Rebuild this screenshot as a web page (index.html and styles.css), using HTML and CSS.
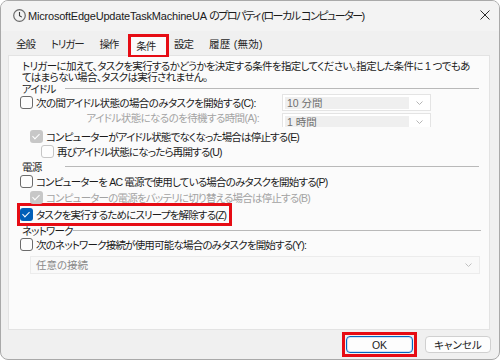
FILE: index.html
```html
<!DOCTYPE html>
<html lang="ja">
<head>
  <meta charset="UTF-8">
  <title>プロパティ</title>
  <link rel="stylesheet" href="styles.css">
</head>
<body>
  <div class="window">
    <div class="titlebar">
      <svg class="app-icon" width="13" height="13" viewBox="0 0 13 13">
        <circle cx="6.5" cy="6.5" r="5.8" fill="#f2f2f2" stroke="#6a6a6a" stroke-width="1.2"/>
        <path d="M6.5 3v3.7l2.3 1.4" fill="none" stroke="#3a3a3a" stroke-width="1.1"/>
      </svg>
      <span class="title">MicrosoftEdgeUpdateTaskMachineUA <span class="jp">のプロパティ (ローカル コンピューター)</span></span>
      <svg class="close" width="10" height="10" viewBox="0 0 10 10">
        <path d="M0.5 0.5l9 9M9.5 0.5l-9 9" stroke="#2b2b2b" stroke-width="1"/>
      </svg>
    </div>

    <div class="tabs">
      <span class="tab">全般</span>
      <span class="tab">トリガー</span>
      <span class="tab">操作</span>
      <span class="tab active">条件</span>
      <span class="tab">設定</span>
      <span class="tab history">履歴 (無効)</span>
    </div>

    <div class="panel">
      <p class="intro">トリガーに加えて、タスクを実行するかどうかを決定する条件を指定してください。指定した条件に 1 つでもあ<br>てはまらない場合、タスクは実行されません。</p>

      <!-- アイドル -->
      <div class="group-head"><span>アイドル</span></div>
      <div class="row grid">
        <label class="check"><span class="box"></span>次の間アイドル状態の場合のみタスクを開始する(C):</label>
        <div class="combo"><span class="field">10 分間</span><svg class="chev" width="7" height="4" viewBox="0 0 7 4"><path d="M0.5 0.5l3 3 3-3" fill="none" stroke="#b5b5b5"/></svg></div>
      </div>
      <div class="row grid row-wait">
        <span class="sub-label">アイドル状態になるのを待機する時間(A):</span>
        <div class="combo cut"><span class="field">1 時間</span><svg class="chev" width="7" height="4" viewBox="0 0 7 4"><path d="M0.5 0.5l3 3 3-3" fill="none" stroke="#b5b5b5"/></svg></div>
      </div>
      <div class="row lv1 row-stop">
        <label class="check"><span class="box dis-on"></span>コンピューターがアイドル状態でなくなった場合は停止する(E)</label>
      </div>
      <div class="row lv2">
        <label class="check"><span class="box dis"></span>再びアイドル状態になったら再開する(U)</label>
      </div>

      <!-- 電源 -->
      <div class="group-head power"><span>電源</span></div>
      <div class="row">
        <label class="check"><span class="box"></span>コンピューターを AC 電源で使用している場合のみタスクを開始する(P)</label>
      </div>
      <div class="row lv1">
        <label class="check muted"><span class="box dis-on"></span>コンピューターの電源をバッテリに切り替える場合は停止する(B)</label>
      </div>
      <div class="row marked">
        <label class="check"><span class="box on"></span>タスクを実行するためにスリープを解除する(Z)</label>
      </div>

      <!-- ネットワーク -->
      <div class="group-head net"><span>ネットワーク</span></div>
      <div class="row">
        <label class="check"><span class="box"></span>次のネットワーク接続が使用可能な場合のみタスクを開始する(Y):</label>
      </div>
      <div class="combo wide"><span class="field">任意の接続</span><svg class="chev" width="7" height="4" viewBox="0 0 7 4"><path d="M0.5 0.5l3 3 3-3" fill="none" stroke="#c0c0c0"/></svg></div>
    </div>

    <div class="footer">
      <span class="mark-btn"><button class="btn default">OK</button></span>
      <button class="btn">キャンセル</button>
    </div>
  </div>
</body>
</html>
```

FILE: styles.css
```css
* {
  box-sizing: border-box;
}

body {
  margin: 0;
  background: #fff;
  font-family: "Liberation Sans", "Noto Sans CJK JP", sans-serif;
  font-feature-settings: "palt";
  font-size: 10.5px;
  letter-spacing: -0.8px;
  color: #1b1b1b;
}

.window {
  width: 500px;
  height: 360px;
  border: 1px solid #a9a9a9;
  border-radius: 8px;
  background: #f0f0f0;
  overflow: hidden;
}

/* title bar */
.titlebar {
  height: 30px;
  display: flex;
  align-items: center;
  padding: 0 0 2px 12px;
  background: #f3f3f3;
}

.app-icon {
  flex: none;
}

.title {
  margin-left: 2px;
  font-size: 11px;
  letter-spacing: -0.2px;
  white-space: nowrap;
}

.title .jp {
  letter-spacing: -1.5px;
}

.close {
  margin-left: auto;
  margin-right: 9px;
}

/* tabs */
.tabs {
  display: flex;
  align-items: flex-end;
  height: 24px;
  padding-left: 7px;
}

.tab {
  height: 20px;
  line-height: 18px;
  padding: 0 8px;
  letter-spacing: -1.1px;
  color: #262626;
}

.tab.history {
  letter-spacing: 0.3px;
}

.tab.active {
  height: 23px;
  line-height: 18px;
  margin: 0 -3px -2px 2px;
  padding: 0 11px 0 5px;
  border: 3px solid #e60c14;
  border-bottom-width: 2px;
  background: #fbfbfb;
  position: relative;
  z-index: 1;
}

/* panel */
.panel {
  height: 275px;
  margin: 0 9px 0 7px;
  padding: 0 0 0 11px;
  background: #fbfbfb;
  border: 1px solid #e3e3e3;
}

.intro {
  margin: 5px 0 0 2px;
  line-height: 11px;
  white-space: nowrap;
  letter-spacing: -0.65px;
}

.group-head {
  display: flex;
  align-items: center;
  height: 11px;
  padding-left: 2px;
}

.group-head span {
  min-width: 43px;
}

.group-head::after {
  content: "";
  flex: none;
  width: 414px;
  height: 1px;
  background: #b9b9b9;
}

.group-head.power {
  height: 14px;
}

.group-head.net {
  height: 12px;
  margin-top: -2px;
}

.group-head.net span {
  min-width: 49px;
}

.group-head.net::after {
  width: 408px;
}

.row {
  display: flex;
  align-items: center;
  height: 16px;
  white-space: nowrap;
}

.row.grid {
  display: grid;
  grid-template-columns: 262px 149px;
  letter-spacing: -0.6px;
}

.row-wait {
  align-items: start;
}

.row-stop {
  margin-top: 3px;
  height: 15px;
}

.lv1 {
  padding-left: 10px;
}

.lv2 {
  padding-left: 21px;
  height: 15px;
}

.check {
  display: flex;
  align-items: center;
  gap: 3px;
}

.muted,
.sub-label {
  color: #a3a3a3;
}

.sub-label {
  text-align: right;
  padding-right: 23px;
  line-height: 16px;
}

.box {
  flex: none;
  width: 13px;
  height: 13px;
  border: 1px solid #6b6b6b;
  border-radius: 3px;
  background: #fdfdfd;
  position: relative;
}

.box.dis {
  border-color: #c6c6c6;
}

.box.dis-on,
.box.on {
  border: none;
  background: #c7c7c7;
}

.box.on {
  background: #005fb8;
}

.box.dis-on::after,
.box.on::after {
  content: "";
  position: absolute;
  left: 4px;
  top: 2px;
  width: 3px;
  height: 6px;
  border: solid #fff;
  border-width: 0 1.5px 1.5px 0;
  transform: rotate(45deg);
}

.marked {
  width: 215px;
  height: 23px;
  margin: -2px 0 0 -3px;
  border: 3px solid #e60c14;
}

/* combo boxes */
.combo {
  display: flex;
  align-items: center;
  height: 17px;
  padding: 2px;
  border: 1px solid #e4e4e4;
  background: #fff;
  color: #6f6f6f;
  letter-spacing: 0;
}

.combo .field {
  flex: 1;
  height: 12px;
  line-height: 12px;
  padding-left: 2px;
  background: #efefef;
}

.combo .chev {
  margin: 0 5px 0 7px;
}

.combo.cut {
  height: 14px;
  margin-top: 3px;
  border-bottom: none;
  padding-bottom: 0;
  overflow: hidden;
}

.combo.cut .field {
  height: 11px;
  align-self: flex-end;
  overflow: hidden;
}

.combo.wide {
  width: 450px;
  height: 18px;
  margin: 4px 0 0 10px;
  background: #f9f9f9;
  border-color: #ececec;
  color: #8a8a8a;
}

.combo.wide .field {
  background: none;
  padding-left: 3px;
}

/* buttons */
.footer {
  display: flex;
  justify-content: flex-end;
  align-items: center;
  gap: 8px;
  padding: 2px 8px 0 0;
}

.mark-btn {
  padding: 1px;
  border: 3px solid #e60c14;
}

.btn {
  width: 66px;
  height: 17px;
  padding: 0;
  border: 1px solid #d0d0d0;
  border-radius: 4px;
  background: #fdfdfd;
  font: inherit;
  line-height: 14px;
  color: #1b1b1b;
}

.btn.default {
  width: 67px;
  border-color: #0067c0;
  box-shadow: inset 0 0 0 1px #cfe3f6;
}
```
